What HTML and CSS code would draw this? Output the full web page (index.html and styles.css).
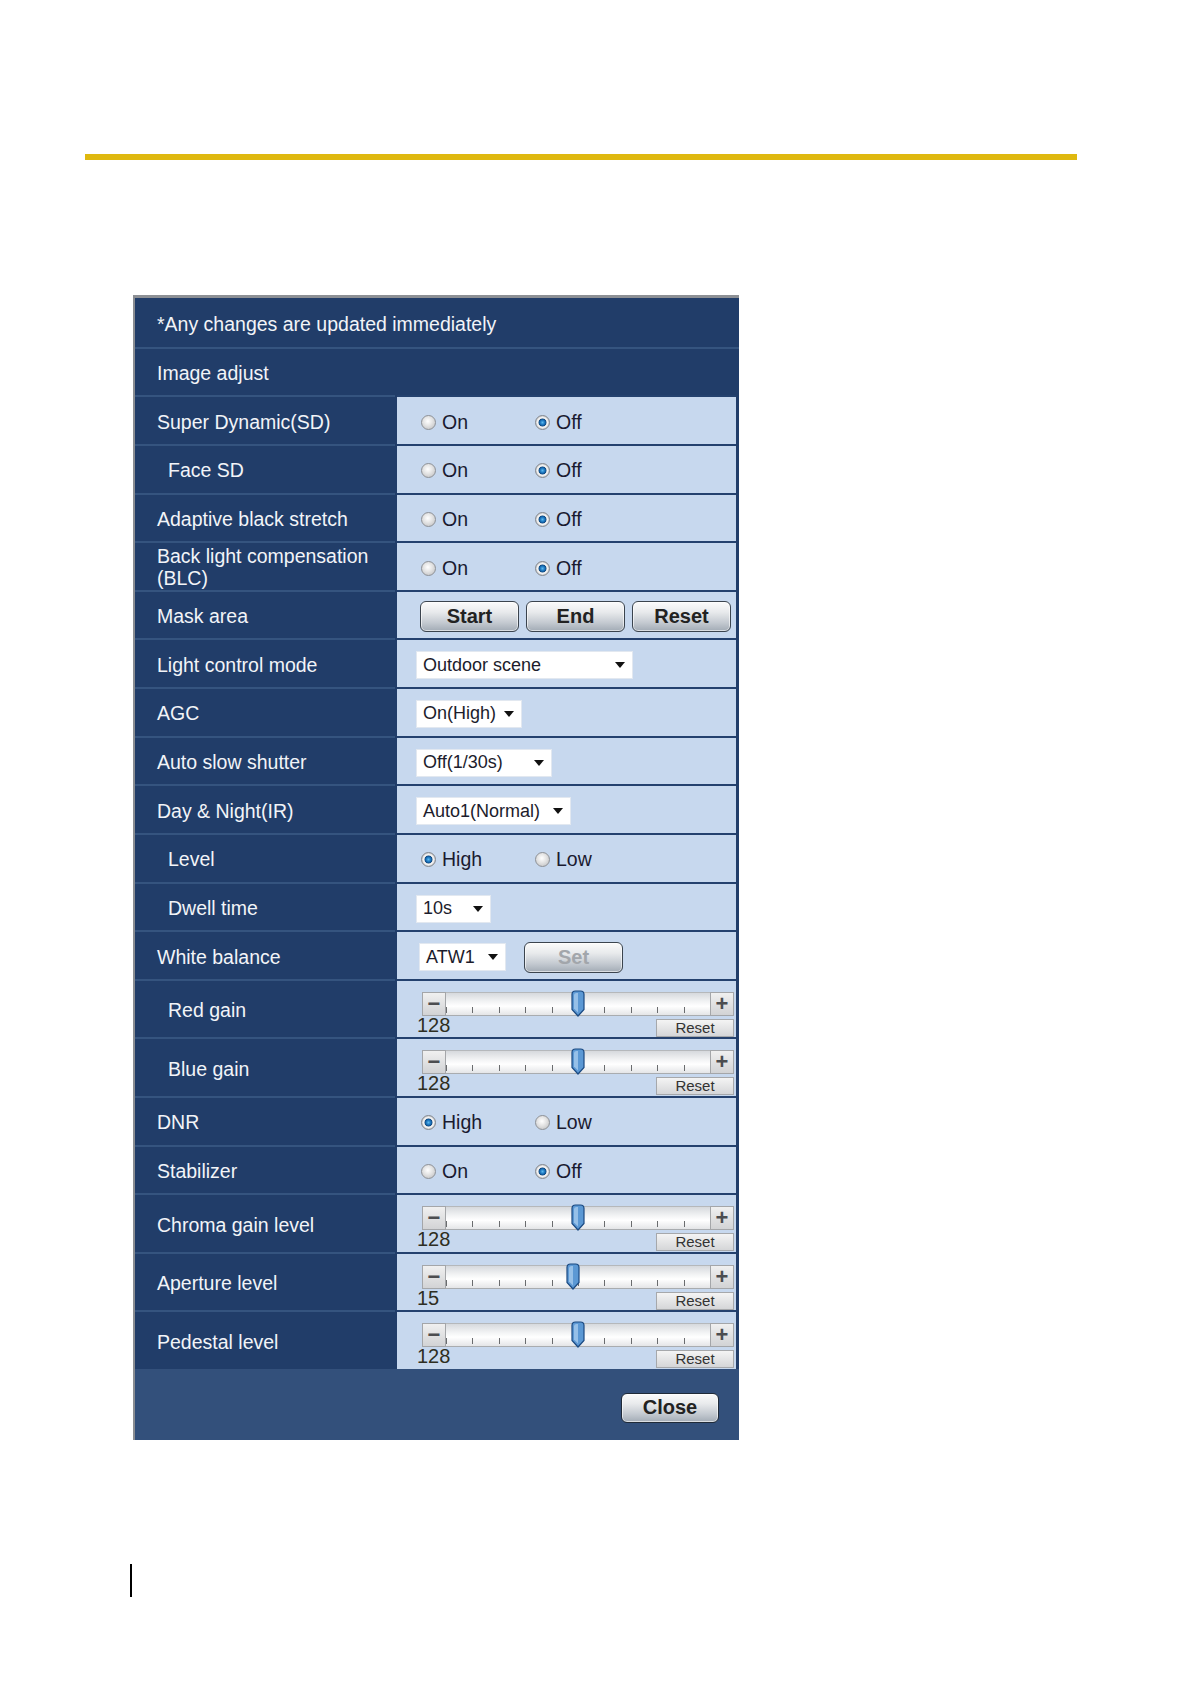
FILE: index.html
```html
<!DOCTYPE html>
<html lang="en">
<head>
  <meta charset="UTF-8" />
  <title>Image adjust</title>
  <link rel="stylesheet" href="styles.css">
</head>
<body>
  <div class="page">
    <div class="rule"></div>

    <div class="panel">
      <div class="head">*Any changes are updated immediately</div>
      <div class="head">Image adjust</div>

      <div class="row">
        <div class="label">Super Dynamic(SD)</div>
        <div class="value">
          <div class="opts">
            <span class="opt"><span class="radio"></span>On</span>
            <span class="opt"><span class="radio on"></span>Off</span>
          </div>
        </div>
      </div>

      <div class="row">
        <div class="label sub">Face SD</div>
        <div class="value">
          <div class="opts">
            <span class="opt"><span class="radio"></span>On</span>
            <span class="opt"><span class="radio on"></span>Off</span>
          </div>
        </div>
      </div>

      <div class="row">
        <div class="label">Adaptive black stretch</div>
        <div class="value">
          <div class="opts">
            <span class="opt"><span class="radio"></span>On</span>
            <span class="opt"><span class="radio on"></span>Off</span>
          </div>
        </div>
      </div>

      <div class="row">
        <div class="label two">Back light compensation<br>(BLC)</div>
        <div class="value">
          <div class="opts">
            <span class="opt"><span class="radio"></span>On</span>
            <span class="opt"><span class="radio on"></span>Off</span>
          </div>
        </div>
      </div>

      <div class="row">
        <div class="label">Mask area</div>
        <div class="value">
          <div class="btns">
            <button class="btn">Start</button>
            <button class="btn">End</button>
            <button class="btn">Reset</button>
          </div>
        </div>
      </div>

      <div class="row">
        <div class="label">Light control mode</div>
        <div class="value">
          <div class="sel sel-scene"><span>Outdoor scene</span><i class="arrow"></i></div>
        </div>
      </div>

      <div class="row">
        <div class="label">AGC</div>
        <div class="value">
          <div class="sel sel-agc"><span>On(High)</span><i class="arrow"></i></div>
        </div>
      </div>

      <div class="row">
        <div class="label">Auto slow shutter</div>
        <div class="value">
          <div class="sel sel-shutter"><span>Off(1/30s)</span><i class="arrow"></i></div>
        </div>
      </div>

      <div class="row">
        <div class="label">Day &amp; Night(IR)</div>
        <div class="value">
          <div class="sel sel-night"><span>Auto1(Normal)</span><i class="arrow"></i></div>
        </div>
      </div>

      <div class="row">
        <div class="label sub">Level</div>
        <div class="value">
          <div class="opts">
            <span class="opt"><span class="radio on"></span>High</span>
            <span class="opt"><span class="radio"></span>Low</span>
          </div>
        </div>
      </div>

      <div class="row">
        <div class="label sub">Dwell time</div>
        <div class="value">
          <div class="sel sel-dwell"><span>10s</span><i class="arrow"></i></div>
        </div>
      </div>

      <div class="row">
        <div class="label">White balance</div>
        <div class="value">
          <div class="sel sel-wb"><span>ATW1</span><i class="arrow"></i></div>
          <button class="btn btn-set">Set</button>
        </div>
      </div>

      <div class="row tall">
        <div class="label sub">Red gain</div>
        <div class="value slide">
          <div class="slider">
            <div class="track">
              <span class="step">&minus;</span>
              <div class="bar">
                <svg class="thumb" style="left: 50%" width="14" height="27" viewBox="0 0 14 27"><path d="M1 4.5 Q1 1 4.5 1 H9.5 Q13 1 13 4.5 V19.5 L7 26 L1 19.5 Z" fill="#5b98d4" stroke="#1b4a82" stroke-width="1.2"/><path d="M3 5 Q3 3 5.5 3 H7 V22.5 L3 18.5 Z" fill="#a9cdef" opacity=".75"/></svg>
              </div>
              <span class="step">+</span>
            </div>
            <div class="under"><span class="num">128</span><button class="mini">Reset</button></div>
          </div>
        </div>
      </div>

      <div class="row tall">
        <div class="label sub">Blue gain</div>
        <div class="value slide">
          <div class="slider">
            <div class="track">
              <span class="step">&minus;</span>
              <div class="bar">
                <svg class="thumb" style="left: 50%" width="14" height="27" viewBox="0 0 14 27"><path d="M1 4.5 Q1 1 4.5 1 H9.5 Q13 1 13 4.5 V19.5 L7 26 L1 19.5 Z" fill="#5b98d4" stroke="#1b4a82" stroke-width="1.2"/><path d="M3 5 Q3 3 5.5 3 H7 V22.5 L3 18.5 Z" fill="#a9cdef" opacity=".75"/></svg>
              </div>
              <span class="step">+</span>
            </div>
            <div class="under"><span class="num">128</span><button class="mini">Reset</button></div>
          </div>
        </div>
      </div>

      <div class="row">
        <div class="label">DNR</div>
        <div class="value">
          <div class="opts">
            <span class="opt"><span class="radio on"></span>High</span>
            <span class="opt"><span class="radio"></span>Low</span>
          </div>
        </div>
      </div>

      <div class="row">
        <div class="label">Stabilizer</div>
        <div class="value">
          <div class="opts">
            <span class="opt"><span class="radio"></span>On</span>
            <span class="opt"><span class="radio on"></span>Off</span>
          </div>
        </div>
      </div>

      <div class="row tall">
        <div class="label">Chroma gain level</div>
        <div class="value slide">
          <div class="slider">
            <div class="track">
              <span class="step">&minus;</span>
              <div class="bar">
                <svg class="thumb" style="left: 50%" width="14" height="27" viewBox="0 0 14 27"><path d="M1 4.5 Q1 1 4.5 1 H9.5 Q13 1 13 4.5 V19.5 L7 26 L1 19.5 Z" fill="#5b98d4" stroke="#1b4a82" stroke-width="1.2"/><path d="M3 5 Q3 3 5.5 3 H7 V22.5 L3 18.5 Z" fill="#a9cdef" opacity=".75"/></svg>
              </div>
              <span class="step">+</span>
            </div>
            <div class="under"><span class="num">128</span><button class="mini">Reset</button></div>
          </div>
        </div>
      </div>

      <div class="row tall">
        <div class="label">Aperture level</div>
        <div class="value slide">
          <div class="slider">
            <div class="track">
              <span class="step">&minus;</span>
              <div class="bar">
                <svg class="thumb" style="left: 48.2%" width="14" height="27" viewBox="0 0 14 27"><path d="M1 4.5 Q1 1 4.5 1 H9.5 Q13 1 13 4.5 V19.5 L7 26 L1 19.5 Z" fill="#5b98d4" stroke="#1b4a82" stroke-width="1.2"/><path d="M3 5 Q3 3 5.5 3 H7 V22.5 L3 18.5 Z" fill="#a9cdef" opacity=".75"/></svg>
              </div>
              <span class="step">+</span>
            </div>
            <div class="under"><span class="num">15</span><button class="mini">Reset</button></div>
          </div>
        </div>
      </div>

      <div class="row tall">
        <div class="label">Pedestal level</div>
        <div class="value slide">
          <div class="slider">
            <div class="track">
              <span class="step">&minus;</span>
              <div class="bar">
                <svg class="thumb" style="left: 50%" width="14" height="27" viewBox="0 0 14 27"><path d="M1 4.5 Q1 1 4.5 1 H9.5 Q13 1 13 4.5 V19.5 L7 26 L1 19.5 Z" fill="#5b98d4" stroke="#1b4a82" stroke-width="1.2"/><path d="M3 5 Q3 3 5.5 3 H7 V22.5 L3 18.5 Z" fill="#a9cdef" opacity=".75"/></svg>
              </div>
              <span class="step">+</span>
            </div>
            <div class="under"><span class="num">128</span><button class="mini">Reset</button></div>
          </div>
        </div>
      </div>

      <div class="foot">
        <button class="btn btn-close">Close</button>
      </div>
    </div>

    <div class="mark"></div>
  </div>
</body>
</html>
```

FILE: styles.css
```css
body {
  margin: 0;
  background: #fff;
  font-family: "Liberation Sans", Arial, sans-serif;
}

.page {
  width: 1191px;
  height: 1684px;
  padding-top: 154px;
  box-sizing: border-box;
  overflow: hidden;
}

.rule {
  margin-left: 85px;
  width: 992px;
  height: 6px;
  background: #dfb80f;
}

.panel {
  margin: 135px 0 0 133px;
  width: 606px;
  box-sizing: border-box;
  border-top: 3px solid #8d9095;
  border-left: 2px solid #8a8d92;
  background: #213d69;
}

.head {
  height: 48.65px;
  box-sizing: border-box;
  border-top: 2px solid #35547f;
  padding: 3px 0 0 22px;
  display: flex;
  align-items: center;
  color: #f2f4f8;
  font-size: 19.5px;
}

.head:first-child {
  border-top-color: #213d69;
}

.row {
  display: flex;
  height: 48.65px;
}

.row.tall {
  height: 58.5px;
}

.label {
  width: 260px;
  flex: none;
  box-sizing: border-box;
  border-top: 2px solid #35547f;
  padding: 3px 0 0 22px;
  display: flex;
  align-items: center;
  color: #f2f4f8;
  font-size: 19.5px;
}

.label.sub {
  padding-left: 33px;
}

.label.two {
  line-height: 22px;
  padding-top: 1px;
}

.value {
  flex: 1;
  margin: 0 3px 0 2px;
  border-top: 2px solid #24416e;
  background: #c7d8ee;
  padding: 3px 0 0 19px;
  display: flex;
  align-items: center;
  color: #1a1a30;
  font-size: 19.5px;
}

/* radio groups */
.opts {
  display: flex;
  margin-left: 5px;
}

.opt {
  width: 114px;
  display: flex;
  align-items: center;
  gap: 6px;
}

.radio {
  width: 15px;
  height: 15px;
  box-sizing: border-box;
  border-radius: 50%;
  border: 1px solid #8e9196;
  background: radial-gradient(circle at 45% 40%, #ffffff, #e2e2e2 45%, #b9babc);
}

.radio.on {
  border-color: #84888e;
  background: radial-gradient(circle, #5ab8ef 0, #1d78c0 2.2px, #0f4c88 3.6px, #e6e6e6 4.3px, #f4f4f4 5px, #c0c1c3 7px);
}

/* buttons */
.btns {
  display: flex;
  gap: 7px;
  margin-left: 4px;
}

.btn {
  width: 99px;
  height: 31px;
  padding: 0;
  border: 1px solid #3b444e;
  border-radius: 6px;
  background: linear-gradient(#fbfbfb, #e8eaec 35%, #c3c9d0 72%, #a2abb5);
  box-shadow: inset 0 0 0 1px rgba(255, 255, 255, 0.6);
  font-family: "Liberation Sans", Arial, sans-serif;
  font-weight: bold;
  font-size: 20px;
  color: #222;
}

.btn-set {
  margin-left: 18px;
  color: #a2a6ab;
}

.btn-close {
  width: 98px;
  height: 30px;
  border-color: #1f2a38;
}

/* dropdowns */
.sel {
  height: 28px;
  box-sizing: border-box;
  display: flex;
  align-items: center;
  justify-content: space-between;
  padding: 0 7px 0 6px;
  background: #fff;
  border: 1px solid #e2e8f0;
  font-size: 18px;
  color: #1c1c2c;
}

.sel-scene { width: 217px; }
.sel-agc { width: 106px; }
.sel-shutter { width: 136px; }
.sel-night { width: 155px; }
.sel-dwell { width: 75px; }
.sel-wb { width: 87px; margin-left: 3px; }

.arrow {
  width: 0;
  height: 0;
  border-left: 5px solid transparent;
  border-right: 5px solid transparent;
  border-top: 6px solid #111;
}

/* sliders */
.value.slide {
  display: block;
  padding: 11px 0 0 20px;
}

.slider {
  width: 317px;
}

.track {
  display: flex;
  margin-left: 5px;
  height: 24px;
}

.step {
  width: 24px;
  height: 24px;
  box-sizing: border-box;
  border: 1px solid #a4a6a9;
  background: linear-gradient(#f0f0f0, #d2d3d5);
  display: flex;
  align-items: center;
  justify-content: center;
  font-weight: bold;
  font-size: 22px;
  line-height: 1;
  color: #4c4d50;
}

.bar {
  flex: 1;
  position: relative;
  box-sizing: border-box;
  border-top: 1px solid #b5b8bb;
  border-bottom: 1px solid #a9acaf;
  background: linear-gradient(#d6d9dd, #f3f4f5 40%, #ffffff 60%, #e4e5e7);
}

.bar::after {
  content: "";
  position: absolute;
  left: 0;
  right: 0;
  bottom: 2px;
  height: 6px;
  background: repeating-linear-gradient(90deg, #6a6c6e 0 1px, transparent 1px 10%);
}

.thumb {
  position: absolute;
  top: -3px;
  transform: translateX(-50%);
  z-index: 1;
}

.under {
  display: flex;
  justify-content: space-between;
  align-items: flex-start;
  margin-top: 3px;
  height: 18px;
}

.num {
  margin-top: -3px;
  font-size: 20px;
  line-height: 18px;
  color: #2e2e22;
}

.mini {
  width: 78px;
  height: 18px;
  padding: 0;
  border: 1px solid #a6a8ab;
  background: linear-gradient(#f4f4f4, #d5d6d8);
  font-family: "Liberation Sans", Arial, sans-serif;
  font-size: 15px;
  line-height: 16px;
  color: #333;
}

.foot {
  height: 71px;
  box-sizing: border-box;
  background: #33507b;
  display: flex;
  justify-content: flex-end;
  align-items: flex-start;
  padding: 24px 20px 0 0;
}

.mark {
  margin: 124px 0 0 130px;
  width: 2px;
  height: 33px;
  background: #000;
}
```
